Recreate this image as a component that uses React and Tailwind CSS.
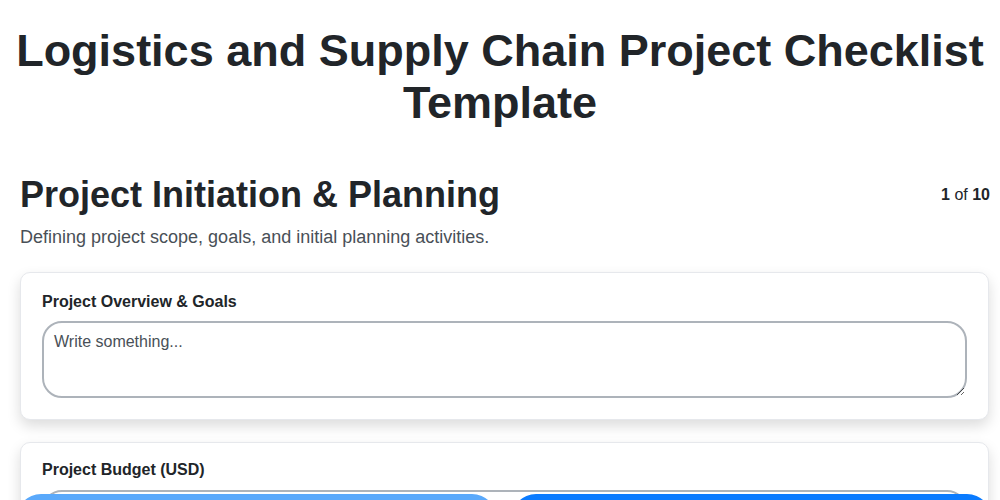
export default function App() {
  return (
    <div className="min-h-screen bg-white text-[#212529] font-['Liberation_Sans',Arial,sans-serif]">
      <h1 className="pt-[25px] px-4 text-center text-[45px] leading-[52px] font-bold">
        Logistics and Supply Chain Project Checklist Template
      </h1>

      <div className="pl-5 pr-[10px] pt-[44px]">
        <div className="flex items-start justify-between">
          <h2 className="text-[36px] leading-[44px] font-bold">Project Initiation &amp; Planning</h2>
          <div className="pt-[10px] text-[16px] leading-6">
            <span className="font-bold">1</span> of <span className="font-bold">10</span>
          </div>
        </div>
        <p className="mt-[7px] text-[18px] leading-[27px] text-[#495057]">
          Defining project scope, goals, and initial planning activities.
        </p>

        <div className="mt-[21px] mr-[1px] flex flex-col gap-[22px] pb-24">
          <div className="rounded-[10px] border border-[#e6e8ec] bg-white px-[21px] pt-[19px] pb-[21px] shadow-[0_6px_14px_rgba(0,0,0,0.14)]">
            <label className="block text-[16px] font-bold leading-5">Project Overview &amp; Goals</label>
            <textarea
              placeholder="Write something..."
              className="mt-[9px] block h-[77px] w-full rounded-[20px] border-2 border-[#adb3ba] px-[10px] py-[7px] text-[16px] placeholder:text-[#495057] outline-none"
            />
          </div>

          <div className="rounded-[10px] border border-[#e6e8ec] bg-white px-[21px] pt-[17px] pb-[21px] shadow-[0_6px_14px_rgba(0,0,0,0.14)]">
            <label className="block text-[16px] font-bold leading-5">Project Budget (USD)</label>
            <input
              type="number"
              className="mt-[10px] block h-[44px] w-full rounded-[20px] border-2 border-[#adb3ba] px-[10px] text-[16px] outline-none"
            />
          </div>
        </div>
      </div>

      <div className="fixed inset-x-0 bottom-[-44px] flex gap-[14px] pl-[16px] pr-[8px]">
        <button aria-label="Previous" className="h-[50px] flex-1 rounded-full bg-[#5aa9fb]" />
        <button aria-label="Next" className="h-[50px] flex-1 rounded-full bg-[#0a7bff]" />
      </div>
    </div>
  );
}
